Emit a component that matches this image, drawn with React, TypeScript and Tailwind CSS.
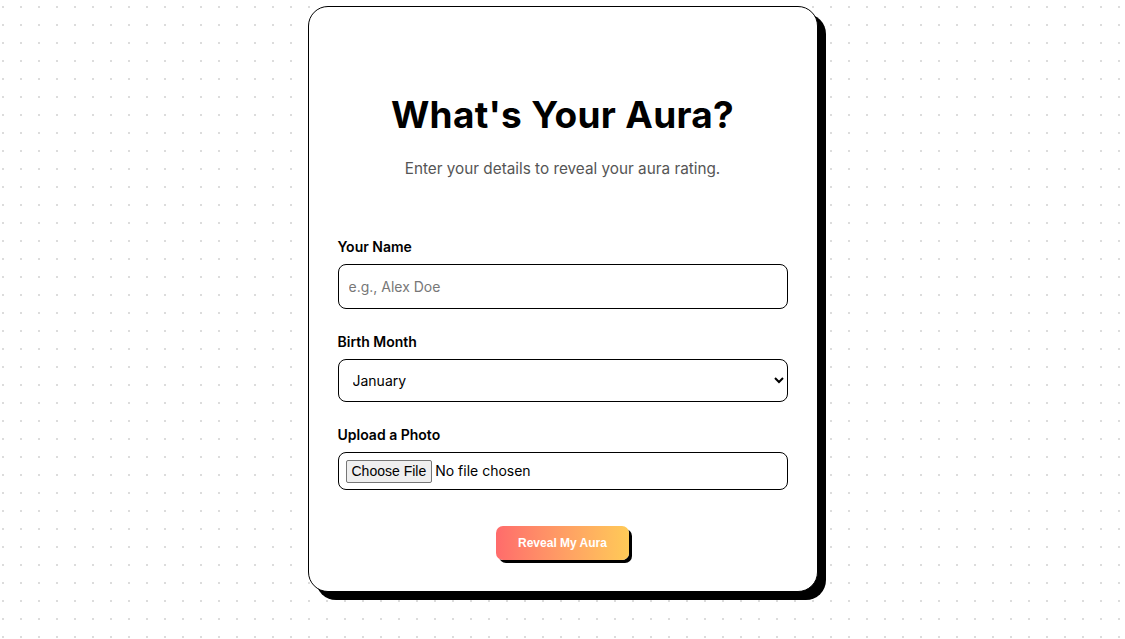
import React, { useState } from 'react';

const months = [
    'January', 'February', 'March', 'April', 'May', 'June',
    'July', 'August', 'September', 'October', 'November', 'December',
];

export default function App() {
    const [name, setName] = useState('');
    const [month, setMonth] = useState('January');

    return (
        <div
            className="min-h-screen w-full bg-white bg-[radial-gradient(#dcdcdc_1px,transparent_1.2px)] bg-[size:18px_18px] bg-[position:-6px_-2px] pt-[6px]"
            style={{ fontFamily: 'Inter, "Noto Sans", sans-serif' }}
        >
            <div className="mx-auto w-[510px] rounded-[20px] border border-black bg-white px-[29px] pt-[83px] pb-[31px] shadow-[8px_8px_0_#000]">
                {/* Header */}
                <h1 className="text-center text-[37px] font-bold leading-[50px] tracking-[0.3px] text-black">
                    What's Your Aura?
                </h1>
                <p className="mt-[18px] text-center text-[15.3px] leading-[22px] text-[#555]">
                    Enter your details to reveal your aura rating.
                </p>

                {/* Form */}
                <form className="mt-[56px]" onSubmit={(e) => e.preventDefault()}>
                    <label className="block text-[14px] font-semibold leading-[21px] text-black">Your Name</label>
                    <input
                        type="text"
                        value={name}
                        onChange={(e) => setName(e.target.value)}
                        placeholder="e.g., Alex Doe"
                        className="mt-[7px] block h-[45px] w-full rounded-[8px] border border-black px-[10px] text-[14px] text-black placeholder:text-[#777] focus:outline-none"
                    />

                    <label className="mt-[22px] block text-[14px] font-semibold leading-[21px] text-black">Birth Month</label>
                    <select
                        value={month}
                        onChange={(e) => setMonth(e.target.value)}
                        className="mt-[7px] block h-[43px] w-full rounded-[8px] border border-black bg-white px-[10px] text-[14px] text-black focus:outline-none"
                    >
                        {months.map((m) => (
                            <option key={m} value={m}>{m}</option>
                        ))}
                    </select>

                    <label className="mt-[22px] block text-[14px] font-semibold leading-[21px] text-black">Upload a Photo</label>
                    <input
                        type="file"
                        accept="image/*"
                        className="mt-[7px] block h-[38px] w-full rounded-[8px] border border-black px-[7px] py-[7px] text-[14px] text-black file:mr-[3px] file:border file:border-[#767676] file:bg-[#efefef] file:px-[5px] file:text-[14px] file:font-['Liberation_Sans'] file:rounded-[2px]"
                    />

                    <div className="mt-[36px] flex justify-center">
                        <button
                            type="submit"
                            className="h-[34px] w-[133px] rounded-[7px] bg-gradient-to-r from-[#ff6b6b] to-[#feca57] text-[12px] font-bold text-white shadow-[3px_3px_0_#000]"
                            style={{ fontFamily: '"Liberation Sans", Arial, sans-serif' }}
                        >
                            Reveal My Aura
                        </button>
                    </div>
                </form>
            </div>
        </div>
    );
}
